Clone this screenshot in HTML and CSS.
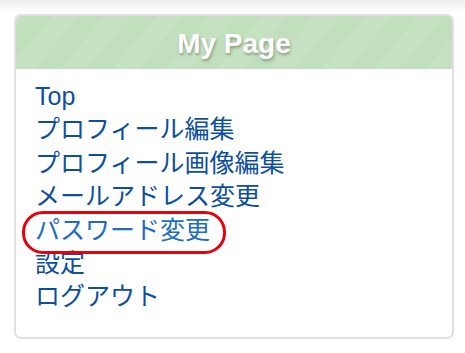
FILE: index.html
```html
<!DOCTYPE html>
<html lang="ja">
<head>
    <meta charset="UTF-8">
    <meta name="viewport" content="width=device-width, initial-scale=1.0">
    <title>My Page</title>
    <link rel="stylesheet" href="styles.css">
</head>
<body>

<div class="page">
    <div class="side-box">
        <h2 class="side-title">My Page</h2>

        <ul class="side-menu">
            <li><a href="#">Top</a></li>
            <li><a href="#">プロフィール編集</a></li>
            <li><a href="#">プロフィール画像編集</a></li>
            <li><a href="#">メールアドレス変更</a></li>
            <!-- highlighted item -->
            <li><a href="#" class="marked">パスワード変更</a></li>
            <li><a href="#">設定</a></li>
            <li><a href="#">ログアウト</a></li>
        </ul>
    </div>
</div>

</body>
</html>
```

FILE: styles.css
```css
body {
    font-family: "Liberation Sans", "Noto Sans CJK JP", sans-serif;
    background: linear-gradient(to bottom, #efefef 0, #ffffff 14px) no-repeat;
    background-color: #fff;
    margin: 0;
    padding: 0;
}

.page {
    padding: 14px 11px 0 14px;
}

.side-box {
    border: 2px solid #e1e1e5;
    border-radius: 7px;
    background: #fff;
    overflow: hidden;
    height: 325px;
    box-sizing: border-box;
}

.side-title {
    margin: 0;
    height: 53px;
    line-height: 55px;
    text-align: center;
    font-size: 28px;
    font-weight: bold;
    color: #fff;
    text-shadow: 1px 2px 3px rgba(0, 0, 0, 0.3);
    background-color: #c1dfbc;
    background-image: repeating-linear-gradient(
        -50deg,
        rgba(255, 255, 255, 0.09) 0,
        rgba(255, 255, 255, 0.09) 20px,
        rgba(255, 255, 255, 0) 20px,
        rgba(255, 255, 255, 0) 40px
    );
}

.side-menu {
    list-style: none;
    margin: 0;
    padding: 11px 0 0 19px;
    font-size: 25px;
    line-height: 33.4px;
}

.side-menu a {
    color: #0d4f9c;
    text-decoration: none;
}

.side-menu a.marked {
    color: #1d6dc2;
    position: relative;
}

.side-menu a.marked::after {
    content: "";
    position: absolute;
    left: -13px;
    right: -16px;
    top: -5px;
    bottom: -10px;
    border: 3px solid #e8000b;
    border-radius: 21px;
}
```
